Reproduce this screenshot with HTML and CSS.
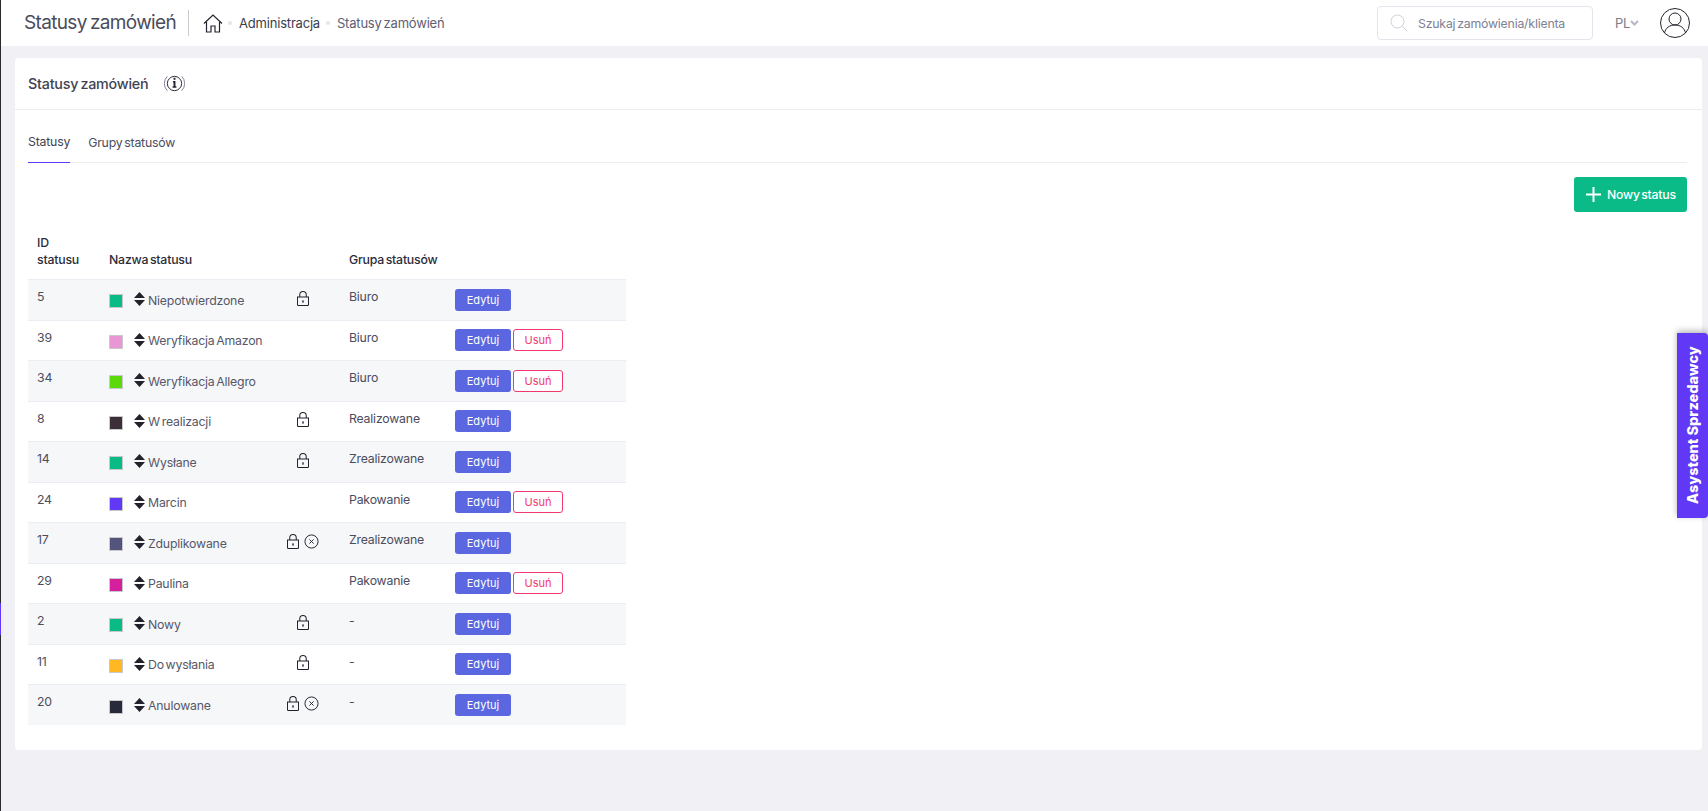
FILE: index.html
```html
<!DOCTYPE html>
<html lang="pl">
  <head>
    <meta charset="UTF-8" />
    <title>Statusy zamówień</title>
    <link rel="stylesheet" href="styles.css">
  </head>
  <body>
    <svg class="sprite" width="0" height="0">
      <symbol id="arrows" viewBox="0 0 11 14">
        <path d="M5.500 0 11 6H0zM0 8h11l-5.500 6z" fill="#22222c" />
      </symbol>
      <symbol id="lock" viewBox="0 0 13 16">
        <g fill="none" stroke="#20202a" stroke-width="1.100">
          <path d="M3 6.500V4a3.500 3.500 0 0 1 7 0v2.500" />
          <path d="M.5 6.500h12v8a1 1 0 0 1-1 1h-10a1 1 0 0 1-1-1z" />
        </g>
        <rect x="5.500" y="10" width="2" height="2.500" fill="#55576a" />
      </symbol>
      <symbol id="cancel" viewBox="0 0 16 16">
        <circle cx="8" cy="8" r="7" fill="none" stroke="#20202a" />
        <path d="m5.800 5.800 4.400 4.400m0-4.400-4.400 4.400" fill="none" stroke="#20202a" />
      </symbol>
    </svg>

    <div class="left-mark"></div>

    <header class="topbar">
      <h1 class="page-title">Statusy zamówień</h1>
      <nav class="crumbs">
        <svg class="home-icon" viewBox="0 0 20 19" width="20" height="19">
          <path d="M1 9.500 10 1l9 8.500M3.500 8v10h4.500v-6h4v6h4.500V8" fill="none" stroke="#23232e" stroke-width="1.200" />
        </svg>
        <span class="dot"></span>
        <a class="crumb">Administracja</a>
        <span class="dot"></span>
        <a class="crumb crumb-last">Statusy zamówień</a>
      </nav>
      <div class="search">
        <svg viewBox="0 0 18 18" width="18" height="18">
          <circle cx="7.500" cy="7.500" r="6.500" fill="none" stroke="#cfd2dc" />
          <path d="m12.300 12.300 5 5" stroke="#cfd2dc" />
        </svg>
        <span class="search-text">Szukaj zamówienia/klienta</span>
      </div>
      <div class="lang">PL<svg viewBox="0 0 9 6" width="9" height="6"><path d="m1 1 3.500 3.500L8 1" fill="none" stroke="#b5b8c6" stroke-width="2" /></svg></div>
      <svg class="avatar" viewBox="0 0 30 30" width="30" height="30">
        <g fill="none" stroke="#23232e">
          <circle cx="15" cy="15" r="14.500" />
          <circle cx="15" cy="11" r="6" />
          <path d="M4.500 25c1-5 5-8 10.500-8s9.500 3 10.500 8" />
        </g>
      </svg>
    </header>

    <main class="content">
      <section class="card">
        <div class="card-header">
          <h2 class="card-title">Statusy zamówień</h2>
          <svg class="info-icon" viewBox="0 0 22 22" width="21" height="21">
            <g fill="none" stroke="#23232e">
              <circle cx="11" cy="11" r="7.500" />
              <path d="M3.500 3.500a10.500 10.500 0 0 0 0 15M18.500 3.500a10.500 10.500 0 0 1 0 15" stroke="#7a7f93" />
            </g>
            <path d="M10 5h2v2h-2zM9.500 8.500H12V14h1v1.500H9V14h1v-4h-.5z" fill="#23232e" />
          </svg>
        </div>
        <div class="card-body">
          <div class="tabs">
            <a class="tab tab-active">Statusy</a>
            <a class="tab">Grupy statusów</a>
          </div>
          <div class="toolbar">
            <button class="btn-new">
              <svg viewBox="0 0 15 15" width="15" height="15"><path d="M7.500 0v15M0 7.500h15" stroke="#fff" stroke-width="2" /></svg>
              Nowy status
            </button>
          </div>

          <table class="status-table">
            <thead>
              <tr>
                <th class="col-id">ID statusu</th>
                <th class="col-name">Nazwa statusu</th>
                <th class="col-group">Grupa statusów</th>
                <th class="col-actions"></th>
              </tr>
            </thead>
            <tbody>
              <tr>
                <td class="cell-top">5</td>
                <td><div class="name"><span class="swatch c-green"></span><svg class="arrows"><use href="#arrows" /></svg><span class="name-text">Niepotwierdzone</span><span class="flags"><svg class="flag-lock"><use href="#lock" /></svg></span></div></td>
                <td class="cell-top">Biuro</td>
                <td><div class="actions"><button class="btn-edit">Edytuj</button></div></td>
              </tr>
              <tr>
                <td class="cell-top">39</td>
                <td><div class="name"><span class="swatch c-pink"></span><svg class="arrows"><use href="#arrows" /></svg><span class="name-text">Weryfikacja Amazon</span></div></td>
                <td class="cell-top">Biuro</td>
                <td><div class="actions"><button class="btn-edit">Edytuj</button><button class="btn-del">Usuń</button></div></td>
              </tr>
              <tr>
                <td class="cell-top">34</td>
                <td><div class="name"><span class="swatch c-lime"></span><svg class="arrows"><use href="#arrows" /></svg><span class="name-text">Weryfikacja Allegro</span></div></td>
                <td class="cell-top">Biuro</td>
                <td><div class="actions"><button class="btn-edit">Edytuj</button><button class="btn-del">Usuń</button></div></td>
              </tr>
              <tr>
                <td class="cell-top">8</td>
                <td><div class="name"><span class="swatch c-brown"></span><svg class="arrows"><use href="#arrows" /></svg><span class="name-text">W realizacji</span><span class="flags"><svg class="flag-lock"><use href="#lock" /></svg></span></div></td>
                <td class="cell-top">Realizowane</td>
                <td><div class="actions"><button class="btn-edit">Edytuj</button></div></td>
              </tr>
              <tr>
                <td class="cell-top">14</td>
                <td><div class="name"><span class="swatch c-green"></span><svg class="arrows"><use href="#arrows" /></svg><span class="name-text">Wysłane</span><span class="flags"><svg class="flag-lock"><use href="#lock" /></svg></span></div></td>
                <td class="cell-top">Zrealizowane</td>
                <td><div class="actions"><button class="btn-edit">Edytuj</button></div></td>
              </tr>
              <tr>
                <td class="cell-top">24</td>
                <td><div class="name"><span class="swatch c-violet"></span><svg class="arrows"><use href="#arrows" /></svg><span class="name-text">Marcin</span></div></td>
                <td class="cell-top">Pakowanie</td>
                <td><div class="actions"><button class="btn-edit">Edytuj</button><button class="btn-del">Usuń</button></div></td>
              </tr>
              <tr>
                <td class="cell-top">17</td>
                <td><div class="name"><span class="swatch c-slate"></span><svg class="arrows"><use href="#arrows" /></svg><span class="name-text">Zduplikowane</span><span class="flags"><svg class="flag-lock"><use href="#lock" /></svg><svg class="flag-x"><use href="#cancel" /></svg></span></div></td>
                <td class="cell-top">Zrealizowane</td>
                <td><div class="actions"><button class="btn-edit">Edytuj</button></div></td>
              </tr>
              <tr>
                <td class="cell-top">29</td>
                <td><div class="name"><span class="swatch c-magenta"></span><svg class="arrows"><use href="#arrows" /></svg><span class="name-text">Paulina</span></div></td>
                <td class="cell-top">Pakowanie</td>
                <td><div class="actions"><button class="btn-edit">Edytuj</button><button class="btn-del">Usuń</button></div></td>
              </tr>
              <tr>
                <td class="cell-top">2</td>
                <td><div class="name"><span class="swatch c-green"></span><svg class="arrows"><use href="#arrows" /></svg><span class="name-text">Nowy</span><span class="flags"><svg class="flag-lock"><use href="#lock" /></svg></span></div></td>
                <td class="cell-top">-</td>
                <td><div class="actions"><button class="btn-edit">Edytuj</button></div></td>
              </tr>
              <tr>
                <td class="cell-top">11</td>
                <td><div class="name"><span class="swatch c-amber"></span><svg class="arrows"><use href="#arrows" /></svg><span class="name-text">Do wysłania</span><span class="flags"><svg class="flag-lock"><use href="#lock" /></svg></span></div></td>
                <td class="cell-top">-</td>
                <td><div class="actions"><button class="btn-edit">Edytuj</button></div></td>
              </tr>
              <tr>
                <td class="cell-top">20</td>
                <td><div class="name"><span class="swatch c-navy"></span><svg class="arrows"><use href="#arrows" /></svg><span class="name-text">Anulowane</span><span class="flags"><svg class="flag-lock"><use href="#lock" /></svg><svg class="flag-x"><use href="#cancel" /></svg></span></div></td>
                <td class="cell-top">-</td>
                <td><div class="actions"><button class="btn-edit">Edytuj</button></div></td>
              </tr>
            </tbody>
          </table>
        </div>
      </section>
    </main>

    <div class="assistant">Asystent Sprzedawcy</div>
  </body>
</html>
```

FILE: styles.css
```css
* {
  box-sizing: border-box;
}
html,
body {
  height: 811px;
  overflow: hidden;
}
body {
  margin: 0;
  background-color: #f0f0f5;
  border-left: 1px solid #2a2a2a;
  font-family: "Inter", "Noto Sans", sans-serif;
  font-size: 12.3px;
  letter-spacing: -0.2px;
  word-spacing: -1.5px;
  color: #4b4d5e;
}
.sprite {
  position: absolute;
}
.left-mark {
  position: absolute;
  left: 0;
  top: 603px;
  width: 1px;
  height: 32px;
  background-color: #6038f5;
}

/* top bar */
.topbar {
  display: flex;
  align-items: center;
  height: 46px;
  padding-left: 23px;
  background-color: #fff;
}
.page-title {
  margin: 0;
  padding-right: 12px;
  border-right: 1px solid #c9c9d0;
  font-size: 19px;
  font-weight: 400;
  letter-spacing: -0.65px;
  line-height: 26px;
  color: #4a4c5c;
}
.crumbs {
  display: flex;
  align-items: center;
  margin-left: 14px;
  flex: 1;
}
.home-icon {
  margin-right: 5px;
}
.dot {
  width: 4px;
  height: 4px;
  border-radius: 50%;
  background-color: #e4e5ec;
  margin-right: 7px;
}
.crumb {
  font-size: 13px;
  color: #3b3d4d;
  margin-right: 6px;
}
.crumb-last {
  color: #5e6072;
}
.search {
  display: flex;
  align-items: center;
  gap: 10px;
  width: 216px;
  height: 34px;
  padding-left: 12px;
  margin-right: 22px;
  border: 1px solid #e3e4ec;
  border-radius: 4px;
}
.search-text {
  font-size: 12.300px;
  color: #7e8195;
}
.lang {
  display: flex;
  align-items: center;
  width: 45px;
  font-size: 13px;
  color: #7a7c8c;
}
.avatar {
  margin-right: 18px;
}

/* card */
.content {
  padding: 12px 6px 0 14px;
}
.card {
  height: 692px;
  background-color: #fff;
  border-radius: 4px;
}
.card-header {
  display: flex;
  align-items: center;
  gap: 16px;
  height: 52px;
  padding-left: 13px;
  border-bottom: 1px solid #ebedf3;
}
.card-title {
  margin: 0;
  font-size: 14.300px;
  font-weight: 500;
  color: #3f4254;
}
.card-body {
  padding: 0 15px 0 13px;
}
.tabs {
  display: flex;
  gap: 18px;
  height: 53px;
  border-bottom: 1px solid #ebedf3;
}
.tab {
  display: flex;
  align-items: flex-end;
  padding-bottom: 13px;
  margin-bottom: -1px;
  color: #4b4d5e;
}
.tab-active {
  border-bottom: 1px solid #6038f5;
  color: #3f4254;
}
.toolbar {
  display: flex;
  justify-content: flex-end;
  padding-top: 14px;
}
.btn-new {
  display: flex;
  align-items: center;
  gap: 6px;
  width: 113px;
  height: 35px;
  padding: 0 0 0 12px;
  border: none;
  border-radius: 3px;
  background-color: #0bbb87;
  color: #fff;
  font-family: inherit;
  font-size: 12.200px;
  font-weight: 500;
  letter-spacing: inherit;
  word-spacing: inherit;
}

/* table */
.status-table {
  width: 598px;
  margin-top: 22px;
  border-collapse: collapse;
  table-layout: fixed;
}
.status-table th {
  padding: 0 9px 11px;
  vertical-align: bottom;
  text-align: left;
  font-weight: 500;
  line-height: 17px;
  color: #2b2d3a;
}
.col-id {
  width: 72px;
}
.col-name {
  width: 240px;
}
.col-group {
  width: 106px;
  white-space: nowrap;
}
.status-table td {
  height: 40.500px;
  padding: 0 9px;
  border-top: 1px solid #ebedf3;
}
.status-table tbody tr:nth-child(odd) td {
  background-color: #f6f7f9;
}
.status-table td.cell-top {
  padding-top: 7px;
  vertical-align: top;
  line-height: 20px;
}
.name {
  display: flex;
  align-items: center;
  padding-top: 1px;
}
.swatch {
  width: 14px;
  height: 14px;
  border: 1px solid #c9c9c9;
  margin-top: 2px;
}
.c-green {
  background-color: #0bbb87;
}
.c-pink {
  background-color: #e896d4;
}
.c-lime {
  background-color: #5cd90b;
}
.c-brown {
  background-color: #3d2f38;
}
.c-violet {
  background-color: #6038f5;
}
.c-slate {
  background-color: #53557c;
}
.c-magenta {
  background-color: #d4209c;
}
.c-amber {
  background-color: #ffb822;
}
.c-navy {
  background-color: #282a3c;
}
.arrows {
  width: 11px;
  height: 14px;
  margin: -2px 3px 0 11px;
}
.name-text {
  flex: 1;
  color: #565869;
}
.flags {
  display: flex;
  justify-content: center;
  align-items: center;
  gap: 5px;
  width: 56px;
  margin-top: -4px;
}
.flag-lock {
  width: 12px;
  height: 15px;
}
.flag-x {
  width: 15px;
  height: 15px;
}
.actions {
  display: flex;
  gap: 2px;
}
.btn-edit,
.btn-del {
  height: 22px;
  padding: 0;
  border-radius: 3px;
  font-family: inherit;
  font-size: 11px;
  letter-spacing: 0;
}
.btn-edit {
  width: 56px;
  border: none;
  background-color: #5a67e0;
  color: #fff;
}
.btn-del {
  width: 50px;
  border: 1px solid #f1386f;
  background-color: #fff;
  color: #f1386f;
}

/* side tab */
.assistant {
  position: absolute;
  right: 0;
  top: 333px;
  display: flex;
  align-items: center;
  justify-content: center;
  width: 31px;
  height: 185px;
  border-radius: 4px 0 0 4px;
  background-color: #6038f5;
  box-shadow: 0 2px 6px rgba(0, 0, 0, 0.3);
  color: #fff;
  font-size: 14.500px;
  font-weight: 800;
  letter-spacing: 0;
  word-spacing: 0;
  writing-mode: vertical-rl;
  transform: rotate(180deg);
}
```
